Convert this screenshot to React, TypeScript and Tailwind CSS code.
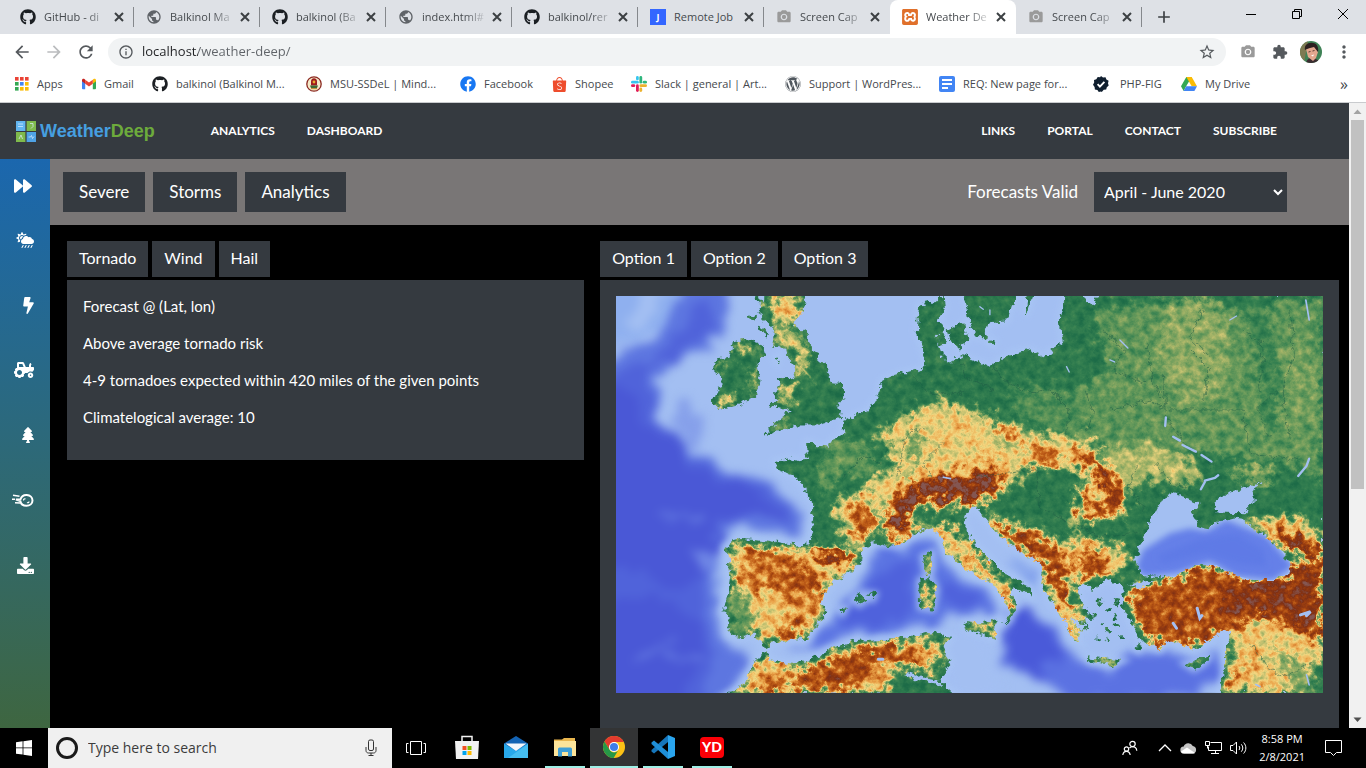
import React from "react";
import {
  MdAdd,
  MdArrowBack,
  MdArrowForward,
  MdCameraAlt,
  MdExtension,
  MdInfoOutline,
  MdMoreVert,
  MdPublic,
  MdRefresh,
  MdStarBorder,
} from "react-icons/md";
import {
  FaBolt,
  FaCloudSunRain,
  FaDownload,
  FaFacebook,
  FaForward,
  FaGithub,
  FaTractor,
  FaTree,
  FaWordpress,
} from "react-icons/fa";
import { SiShopee, SiXampp } from "react-icons/si";

/* ---------- browser icons ---------- */

const GithubIcon = () => <FaGithub className="size-4 shrink-0 text-[#1b1f23]" />;
const GlobeIcon = () => <MdPublic className="size-4 shrink-0 text-[#5f6368]" />;
const CameraIcon = () => <MdCameraAlt className="size-4 shrink-0 text-[#9a9a9a]" />;
const JobIcon = () => (
  <span className="flex size-4 shrink-0 items-center justify-center bg-[#3366ff] text-[9px] font-bold text-white">J</span>
);
const XamppIcon = () => <SiXampp className="size-4 shrink-0 text-[#e0702b]" />;

const AppsIcon = () => {
  const colors = ["#ea4335", "#ea4335", "#ea4335", "#34a853", "#4285f4", "#fbbc05", "#34a853", "#fbbc05", "#fbbc05"];
  return (
    <svg viewBox="0 0 14 14" className="size-3.5">
      {colors.map((c, i) => (
        <rect key={i} x={(i % 3) * 5} y={Math.floor(i / 3) * 5} width="3.6" height="3.6" fill={c} />
      ))}
    </svg>
  );
};

const GmailIcon = () => (
  <svg viewBox="0 0 24 18" className="h-3 w-3.5">
    <path d="M0 2v14.400a1.600 1.600 0 0 0 1.600 1.600H5.500V6z" fill="#4285f4" />
    <path d="M18.500 6v12h3.900a1.600 1.600 0 0 0 1.600-1.600V2z" fill="#34a853" />
    <path d="M18.500 1.500V8.500L24 4.400V2.400C24 .1 21.500-.9 19.800.5z" fill="#fbbc04" />
    <path d="M5.500 8.500V1.500L12 6.400l6.500-4.900v7L12 13.400z" fill="#ea4335" />
    <path d="M0 2.400v2L5.500 8.500v-7L4.200.5C2.500-.9 0 .1 0 2.400z" fill="#c5221f" />
  </svg>
);

const CrestIcon = () => (
  <svg viewBox="0 0 16 16" className="size-4">
    <circle cx="8" cy="8" r="7.200" fill="#f4e9c8" stroke="#8c2a22" strokeWidth="1.300" />
    <path d="M8 2.300c2 0 3 1.500 3 3.200v4H5v-4c0-1.700 1-3.200 3-3.200z" fill="#9c1d1d" />
    <circle cx="8" cy="6" r="1.400" fill="#e8a92d" />
    <path d="M4 9.500h8l-1.200 3H5.200z" fill="#3d6b34" />
    <path d="M5 12.200h6v1H5z" fill="#d08a2c" />
  </svg>
);

const SlackIcon = () => (
  <svg viewBox="0 0 16 16" className="size-4">
    <rect x="5" y="0" width="2.800" height="4.300" rx="1.400" fill="#36c5f0" />
    <rect x="0" y="4.800" width="7.800" height="2.800" rx="1.400" fill="#36c5f0" />
    <rect x="8.400" y="0" width="2.800" height="7.600" rx="1.400" fill="#2eb67d" />
    <rect x="11.700" y="4.800" width="4.300" height="2.800" rx="1.400" fill="#2eb67d" />
    <rect x="8.400" y="8.300" width="7.600" height="2.800" rx="1.400" fill="#ecb22e" />
    <rect x="8.400" y="11.600" width="2.800" height="4.400" rx="1.400" fill="#ecb22e" />
    <rect x="5" y="8.300" width="2.800" height="7.700" rx="1.400" fill="#e01e5a" />
    <rect x="0" y="8.300" width="4.300" height="2.800" rx="1.400" fill="#e01e5a" />
  </svg>
);

const DocsIcon = () => (
  <svg viewBox="0 0 16 16" className="size-4">
    <rect width="16" height="16" rx="2" fill="#4285f4" />
    <path d="M3 4h10M3 8h10M3 12h6" stroke="#fff" strokeWidth="1.800" />
  </svg>
);

const VerifiedIcon = () => (
  <svg viewBox="0 0 16 16" className="mr-[3px] size-4">
    <path
      d="M8 0l2 1.400 2.500-.2.900 2.300 2.200 1.200L15 7.200l.7 2.400-1.900 1.600-.6 2.400-2.500.2L8.800 16 8 15.400l-2.200.5-1.400-2-2.500-.4-.3-2.500L0 8.800l1.200-2.200L1 4.100l2.300-.9L4.700.9l2.400.4z"
      fill="#0f1e2e"
    />
    <path d="M4.600 8.200l2.300 2.400 4.500-4.700" fill="none" stroke="#fff" strokeWidth="1.900" />
  </svg>
);

const DriveIcon = () => (
  <svg viewBox="0 0 16 14" className="h-3.5 w-4">
    <path d="M5.300 0h5.400L5 9.600 2.600 14 0 9.300z" fill="#34a853" />
    <path d="M5.300 0h5.400L16 9.300h-5.300z" fill="#fbbc04" />
    <path d="M5.200 9.300H16L13.400 14H2.600z" fill="#4285f4" />
  </svg>
);

const Avatar = () => (
  <svg viewBox="0 0 22 22" className="size-[22px] rounded-full">
    <rect width="22" height="22" fill="#3f8256" />
    <path d="M0 0h8L4 22H0z" fill="#7d7a52" />
    <path d="M6 22c1-4 3-5 6-5s7 2 8 5z" fill="#3a2c30" />
    <path d="M6 8l8-4 4 7-2 6-3 3-5-4z" fill="#e3a78e" />
    <path d="M5 9c-1-5 3-8 8-7 4 0 6 5 5 9l-4-5-4 1-3 1z" fill="#2c2020" />
    <path d="M8.500 11l2-.5M12.500 10l2-.5" stroke="#5a3a30" />
    <path d="M11 14.500l3-1-1 2z" fill="#fff" />
  </svg>
);

/* ---------- browser frame ---------- */

const tabs = [
  { title: "GitHub - di", Icon: GithubIcon },
  { title: "Balkinol Ma", Icon: GlobeIcon },
  { title: "balkinol (Ba", Icon: GithubIcon },
  { title: "index.html#", Icon: GlobeIcon },
  { title: "balkinol/rer", Icon: GithubIcon },
  { title: "Remote Job", Icon: JobIcon },
  { title: "Screen Cap", Icon: CameraIcon },
  { title: "Weather De", Icon: XamppIcon, active: true },
  { title: "Screen Cap", Icon: CameraIcon },
];

const bookmarks = [
  { label: "Apps", Icon: AppsIcon, width: "w-[67px]" },
  { label: "Gmail", Icon: GmailIcon, width: "w-[70px]" },
  { label: "balkinol (Balkinol M...", Icon: GithubIcon, width: "w-[154px]" },
  { label: "MSU-SSDeL | Mind...", Icon: CrestIcon, width: "w-[154px]" },
  { label: "Facebook", Icon: () => <FaFacebook className="size-4 text-[#1877f2]" />, width: "w-[92px]" },
  { label: "Shopee", Icon: () => <SiShopee className="size-[15px] text-[#ee4d2d]" />, width: "w-[79px]" },
  { label: "Slack | general | Art...", Icon: SlackIcon, width: "w-[154px]" },
  { label: "Support | WordPres...", Icon: () => <FaWordpress className="size-4 text-[#50575e]" />, width: "w-[154px]" },
  { label: "REQ: New page for...", Icon: DocsIcon, width: "w-[154px]" },
  { label: "PHP-FIG", Icon: VerifiedIcon, width: "w-[88px]" },
  { label: "My Drive", Icon: DriveIcon, width: "w-[90px]" },
];

function TabStrip() {
  return (
    <div className="flex h-[34px] shrink-0 bg-[#dee1e6] pl-2">
      {tabs.map(({ title, Icon, active }, i) => (
        <div
          key={i}
          className={
            active
              ? "flex w-[126px] shrink-0 items-center rounded-t-lg bg-white pl-3"
              : "flex w-[126px] shrink-0 items-center pl-3"
          }
        >
          <Icon />
          <span
            className={
              title === "Remote Job"
                ? "ml-2 w-[68px] whitespace-nowrap text-[11px] text-[#45494d]"
                : "ml-2 w-[68px] whitespace-nowrap text-[11px] text-[#45494d] [mask-image:linear-gradient(to_right,black_42px,transparent_66px)]"
            }
          >
            {title}
          </span>
          <button aria-label={`Close ${title}`} className="text-[#3c4043]">
            <svg viewBox="0 0 14 14" className="size-3.5">
              <path d="M3 3l8 8M11 3l-8 8" fill="none" stroke="currentColor" strokeWidth="2" />
            </svg>
          </button>
          {!active && i !== 6 && <span className="ml-auto h-5 w-px bg-[#85888c]" />}
        </div>
      ))}
      <button aria-label="New tab" className="ml-3 text-[#3c4043]">
        <MdAdd className="size-5" />
      </button>
      <div className="ml-auto flex h-7 text-black">
        <button aria-label="Minimize" className="flex w-[46px] items-center justify-center">
          <svg viewBox="0 0 10 10" className="size-2.5"><path d="M0 5.500h10" stroke="currentColor" /></svg>
        </button>
        <button aria-label="Restore" className="flex w-[46px] items-center justify-center">
          <svg viewBox="0 0 10 10" className="size-2.5" fill="none" stroke="currentColor">
            <path d="M.5 2.500h7v7h-7zM2.500 2.500v-2h7v7h-2" />
          </svg>
        </button>
        <button aria-label="Close" className="flex w-[46px] items-center justify-center">
          <svg viewBox="0 0 10 10" className="size-2.5"><path d="M0 0l10 10M10 0L0 10" stroke="currentColor" /></svg>
        </button>
      </div>
    </div>
  );
}

function Toolbar() {
  return (
    <div className="flex h-[36px] shrink-0 items-center bg-white px-3 text-[#55595d]">
      <button aria-label="Back"><MdArrowBack className="size-5" /></button>
      <button aria-label="Forward" className="ml-3 text-[#babcbe]"><MdArrowForward className="size-5" /></button>
      <button aria-label="Reload" className="ml-3"><MdRefresh className="size-5" /></button>
      <div className="ml-3 flex h-7 grow items-center rounded-full bg-[#f1f3f4] px-2.5">
        <MdInfoOutline className="size-4" />
        <input
          aria-label="Address"
          className="ml-2 grow bg-[linear-gradient(to_right,#202124_56px,#5f6368_56px)] bg-clip-text text-[13px] text-transparent outline-none"
          defaultValue="localhost/weather-deep/"
        />
        <button aria-label="Bookmark this page"><MdStarBorder className="size-[18px]" /></button>
      </div>
      <button aria-label="Capture" className="ml-3.5"><MdCameraAlt className="size-4 text-[#9a9a9a]" /></button>
      <button aria-label="Extensions" className="ml-4"><MdExtension className="size-4" /></button>
      <button aria-label="Profile" className="ml-3"><Avatar /></button>
      <button aria-label="Menu" className="ml-3"><MdMoreVert className="size-5" /></button>
    </div>
  );
}

function BookmarksBar() {
  return (
    <div className="flex h-[33px] shrink-0 items-center border-b border-[#c9cbce] bg-white pb-1 pl-[15px] pr-[18px]">
      {bookmarks.map(({ label, Icon, width }) => (
        <a key={label} href="#" className={`flex shrink-0 items-center gap-2 whitespace-nowrap text-[11px] text-[#45494d] ${width}`}>
          <Icon />
          {label}
        </a>
      ))}
      <button aria-label="More bookmarks" className="ml-auto text-base leading-4 text-[#45494d]">»</button>
    </div>
  );
}

/* ---------- relief map ---------- */

const EUROPE =
  "M1000 18L985 32 930 45 925 85 922 130 935 160 945 200 948 235 900 245 850 258 815 275 808 312 790 340 775 362 740 375 705 392 697 435 660 458 655 475 620 470 608 458 590 458 592 495 598 508 565 512 540 503 495 518 510 545 550 555 580 585 590 615 610 630 612 670 608 720 600 765 560 768 500 758 460 752 400 746 375 752 345 772 358 800 362 860 355 910 340 965 357 985 358 1035 400 1040 432 1030 465 1075 485 1058 540 1048 590 1045 612 1010 652 968 632 938 650 900 670 870 720 850 752 820 755 775 790 758 830 765 865 770 900 740 940 718 965 712 990 735 1005 775 1040 815 1085 850 1115 865 1150 880 1180 920 1195 950 1200 970 1182 998 1200 992 1220 945 1204 915 1210 892 1250 905 1264 918 1265 895 1230 878 1180 850 1140 810 1100 770 1070 730 1060 692 1065 665 1100 650 1120 680 1140 705 1170 740 1210 770 1250 795 1290 820 1300 850 1295 890 1320 925 1350 970 1370 1000 1385 1040 1412 1055 1400 1020 1425 1020 1418 985 1450 985 1420 950 1405 905 1415 880 1450 895 1490 870 1525 882 1545 895 1535 920 1545 960 1570 1010 1590 1045 1650 1080 1670 1045 1710 1060 1745 1078 1800 1050 1840 1020 1865 1025 1850 1070 1850 1130 1825 1215H2145V12H1465L1455 45 1430 40 1415 12H1370L1350 90 1360 160 1320 185 1305 207 1265 180 1200 192 1140 232 1095 212 1050 195 1020 220 995 195 978 145 1008 120 985 90 1003 60z";
const BRITAIN =
  "M470 12L450 50 460 90 492 110 485 172 530 175 540 210 557 230 550 272 505 262 517 290 487 315 500 325 478 347 545 362 520 380 480 415 465 437 510 420 560 405 620 405 690 385 695 358 678 345 706 310 700 285 660 280 650 240 622 192 602 180 590 130 550 105 580 62 590 12z";
const IRELAND =
  "M370 155L410 148 455 160 465 195 440 220 450 270 437 320 380 345 325 358 305 330 330 290 342 265 315 250 315 210 360 205z";
const AFRICA =
  "M350 1215L400 1185 440 1110 465 1085 482 1112 540 1122 600 1110 660 1078 740 1055 860 1045 980 1030 1020 1045 1000 1080 1020 1110 1000 1150 990 1175 1035 1215z";
const ISLANDS =
  "M1065 12L1080 90 1098 140 1125 140 1130 100 1190 92 1202 50 1220 12zM1015 122L1062 102 1072 140 1050 175 1028 165zM975 135L1000 130 1010 158 990 165zM1065 998L1115 1002 1162 988 1152 1018 1155 1048 1120 1035 1070 1018zM930 872L962 860 978 900 967 958 932 952zM940 800L967 788 968 838 950 854zM1433 1101L1480 1106 1532 1114 1510 1124 1440 1114zM1728 1122L1765 1112 1802 1096 1782 1120 1752 1138zM730 928L750 914 770 930 748 944zM690 958l16-4-8 14zM778 912l16 2-4 10zM1140 150l14 4-3 10-12-6zM495 208l9-6-4 14zM1575 1075l18-10-8 18zM1370 985l40 5 20 30-15-2zM1255 18h10l-18 60z";
const AEGEAN =
  "M1458 930l18-4 4 12-14 4zM1490 952l14 2-4 12-12-4zM1512 930l16 4-2 10-14-4zM1470 1000l12 2-2 10-10-2zM1492 1020l14 0-2 12-12-4zM1512 1004l12 2 0 8-12 0zM1530 1038l14 2-6 8zM1460 1040l10 2-2 10-8-4zM1440 965l12 4 8 12-14-4zM1508 975l14 6-8 10zM1484 1048l10 2-4 8z";
const BLACK_SEA =
  "M1660 625L1690 612 1720 620 1772 640 1745 668 1772 710 1795 715 1830 690 1870 680 1900 685 1920 712 1970 740 2012 780 2042 820 2035 850 1990 870 1930 870 1870 855 1820 825 1750 830 1700 858 1650 862 1595 855 1575 810 1590 768 1608 720 1630 680z";
const AZOV = "M1820 668L1815 640 1850 610 1900 595 1962 578 1930 600 1935 630 1905 670z";

function ReliefMap() {
  return (
    <svg viewBox="18 18 2121 1191" preserveAspectRatio="xMidYMid slice" role="img" aria-label="Relief map of Europe" className="block w-full">
      <defs>
        <filter id="coast" filterUnits="userSpaceOnUse" x="0" y="0" width="2160" height="1230" colorInterpolationFilters="sRGB">
          <feTurbulence type="fractalNoise" baseFrequency="0.05" numOctaves="3" seed="4" />
          <feDisplacementMap in="SourceGraphic" scale="28" xChannelSelector="R" yChannelSelector="G" />
        </filter>
        <filter id="soft" filterUnits="userSpaceOnUse" x="-60" y="-60" width="2280" height="1350" colorInterpolationFilters="sRGB">
          <feTurbulence type="fractalNoise" baseFrequency="0.014" numOctaves="4" seed="9" result="n" />
          <feDisplacementMap in="SourceGraphic" in2="n" scale="90" xChannelSelector="R" yChannelSelector="G" />
          <feGaussianBlur stdDeviation="14" />
        </filter>
        <filter id="halo" filterUnits="userSpaceOnUse" x="0" y="0" width="2160" height="1230">
          <feGaussianBlur stdDeviation="9" />
        </filter>
        <filter id="relief" filterUnits="userSpaceOnUse" x="0" y="0" width="2160" height="1230" colorInterpolationFilters="sRGB">
          <feGaussianBlur in="SourceGraphic" stdDeviation="10" result="blurred" />
          <feTurbulence type="fractalNoise" baseFrequency="0.035" numOctaves="4" seed="21" result="warp" />
          <feDisplacementMap in="blurred" in2="warp" scale="90" xChannelSelector="R" yChannelSelector="G" result="height" />
          <feTurbulence type="fractalNoise" baseFrequency="0.04" numOctaves="5" seed="7" />
          <feColorMatrix values="1 0 0 0 0  1 0 0 0 0  1 0 0 0 0  0 0 0 0 1" result="noise" />
          <feComposite in="height" in2="noise" operator="arithmetic" k1="0.5" k2="0.78" k3="0.22" k4="-0.09" />
          <feComponentTransfer>
            <feFuncR type="table" tableValues="0.11 0.22 0.42 0.66 0.95 0.92 0.76 0.62 0.50 0.52" />
            <feFuncG type="table" tableValues="0.42 0.51 0.61 0.71 0.84 0.64 0.38 0.25 0.19 0.34" />
            <feFuncB type="table" tableValues="0.28 0.32 0.36 0.41 0.50 0.29 0.10 0.06 0.08 0.32" />
          </feComponentTransfer>
        </filter>
        <mask id="land" maskUnits="userSpaceOnUse" x="0" y="0" width="2160" height="1230">
          <g filter="url(#coast)">
            <path d={EUROPE + BRITAIN + IRELAND + AFRICA + ISLANDS} fill="#fff" stroke="#fff" strokeWidth="3" />
            <path d={AEGEAN} fill="#fff" />
            <path d="M455 40l-20-30M440 75l-25 10M450 110l22 30" stroke="#fff" strokeWidth="9" />
            <path d={BLACK_SEA + AZOV} fill="#000" />
            <path d="M1560 885l40-15 35 8-45 16z" fill="#000" />
            <path d="M885 1150l60 20 45 10" stroke="#000" strokeWidth="12" fill="none" />
          </g>
        </mask>
        <clipPath id="blackSea"><path d={BLACK_SEA} /></clipPath>
      </defs>

      {/* sea floor */}
      <rect x="18" y="18" width="2121" height="1191" fill="#a3bff2" />
      <g filter="url(#soft)">
        <path d="M-60 240L140 150 230-20H340L350 90 290 180 180 220 140 280 150 400 240 480 350 530 480 580 590 690 570 725 350 715 320 790 320 960 350 1060 420 1110 330 1260H-60z" fill="#5d76e0" />
        <path d="M-60 270L140 200 250 60 300 20 320 100 240 180 120 240 100 300 190 440 250 510 350 550 470 600 560 690 340 695 300 790 280 960 310 1060 280 1260H-60z" fill="#5063da" />
        <path d="M-60 290L60 300 150 440 300 560 460 610 520 690 340 700 300 850 200 900-60 780z" fill="#4a58d6" />
        <path d="M-60 980L120 900 270 990 280 1080 230 1260H-60z" fill="#4a58d6" />
        <path d="M-60-20H240L150 120-60 210z" fill="#8fb0ef" />
        <path d="M110-20h70l-70 120-60 20z" fill="#a3bff2" />
        <path d="M190 350l40-30 50 50 0 90-50 10z" fill="#86a0ea" />
        <path d="M240 780l40-10 30 60-30 20z" fill="#7088e6" />
        <path d="M650 1010L720 900 800 790 900 760 960 740 1000 830 1060 880 1150 920 1150 985 1040 970 920 1010 760 1040 620 1085 560 1080z" fill="#5b74e2" />
        <path d="M680 1010l120-170 90-40 30 60-20 120-120 40zM1000 870l90 40 30 50-110-20z" fill="#4f62dc" />
        <path d="M1170 1060L1230 980 1300 990 1380 1090 1500 1150 1580 1090 1720 1100 1820 1070 1830 1180 1650 1240 1400 1230 1280 1170 1180 1120z" fill="#5b72e2" />
        <path d="M1180 1020l50-60 60 30 80 120-90 50-90-50z" fill="#4a5ad9" />
        <path d="M940 1060l110-60 90 60 50 160h-150z" fill="#a3bff2" />
        <path d="M1210 820l70 10 20 70-60-20z" fill="#83a2ec" />
        <path d="M60 1130l80-50 60-40M160 1100l100 20M150 690l60 0 60-10" stroke="#6b84e4" strokeWidth="10" fill="none" />
      </g>
      <g clipPath="url(#blackSea)">
        <path d="M1580 830L1600 780 1680 730 1740 715 1790 725 1850 690 1970 740 2050 830 1990 870 1880 860 1800 815 1700 850 1600 860z" fill="#6580e8" filter="url(#halo)" />
        <path d="M1640 800l120-50 120-20 80 50 10 50-90-10-90-30-130 30z" fill="#5f7ae6" filter="url(#halo)" />
      </g>
      <path d={EUROPE + AFRICA + ISLANDS} fill="none" stroke="#a9c6f5" strokeWidth="22" opacity="0.8" filter="url(#halo)" />
      <path d={AEGEAN} fill="none" stroke="#a3bff2" strokeWidth="26" filter="url(#halo)" />

      {/* terrain: brightness is elevation, coloured by the relief filter */}
      <g mask="url(#land)">
        <g filter="url(#relief)">
          <rect x="-40" y="-40" width="2240" height="1320" fill="#0c0c0c" />
          {/* eastern plains */}
          <path d="M1450 60L1700 20 1850 60 2139 20V560L1900 500 1700 480 1480 460 1340 420 1340 330 1500 240z" fill="#2c2c2c" />
          <path d="M1680 40l120-20 60 90-20 200-120 40-80-160z" fill="#404040" />
          <path d="M1950 200l150-60 39 260-130 20z" fill="#363636" />
          <path d="M1900 20l60 0 60 260-40 200-30-200z" fill="#181818" />
          <path d="M1200 300l120-20 80 60 60 80-100 10-150-60z" fill="#222222" />
          <path d="M1480 470l160-10 120 60 10 60-160 0-80 20z" fill="#505050" />
          <path d="M1850 530l120 0 30 40-100 10z" fill="#444444" />
          {/* central uplands */}
          <path d="M660 440l60 0 80 60-20 60-80-10-60 60-20-60z" fill="#2a2a2a" />
          <path d="M800 430L900 370 1000 330 1140 380 1240 430 1420 440 1500 520 1560 650 1520 690 1380 690 1440 560 1330 520 1240 540 1200 600 1100 550 900 560 830 640 800 600 860 500z" fill="#6a6a6a" />
          <path d="M1200 400l80 20-40 70-80-20z" fill="#484848" />
          <path d="M900 430l30 10-20 110-20 0z" fill="#2a2a2a" />
          <path d="M680 620l70 0 60-80 30 20-40 160-70 60-50-80z" fill="#6a6a6a" />
          <path d="M1160 390l90 50-20 30-80-40zM1080 480l110 40-20 15-90-40zM1040 400l40 10-20 12zM880 530l60-20-20 30z" fill="#989898" />
          <path d="M720 640l60 10 20 50-60 60-10-60z" fill="#ababab" />
          <path d="M1250 460l90 10 10 60-80 0z" fill="#a0a0a0" />
          {/* Alps and Apennines */}
          <path d="M820 720L830 640 880 580 960 550 1190 535 1170 620 1080 650 920 650 900 690 940 720 860 765z" fill="#8e8e8e" />
          <path d="M845 700L855 640 900 595 980 565 1180 550 1140 610 1060 630 940 630 890 660 885 720 865 740z" fill="#e8e8e8" />
          <path d="M940 700L1000 710 1070 760 1130 830 1180 870 1220 950 1190 980 1150 920 1080 850 1020 800z" fill="#747474" />
          <path d="M960 700l60 20 30 20-60-15zM1070 770l30 20 40 60-40-10zM1190 920l20 0 5 40-20 10z" fill="#bababa" />
          {/* Carpathians */}
          <path d="M1370 470L1430 470 1510 540 1550 640 1520 680 1410 690 1400 660 1490 650 1470 570z" fill="#949494" />
          <path d="M1395 480L1430 490 1500 550 1535 640 1510 665 1410 672 1410 655 1500 645 1480 580z" fill="#c8c8c8" />
          <path d="M1400 590l35 0 5 40-30 10z" fill="#bcbcbc" />
          {/* Balkans */}
          <path d="M1110 670L1160 690 1280 720 1380 770 1400 740 1380 690 1400 690 1420 750 1550 780 1560 830 1500 860 1380 870 1400 980 1430 1060 1380 1050 1310 930 1300 840 1180 760z" fill="#707070" />
          <path d="M1130 690L1200 710 1330 760 1370 820 1370 920 1410 980 1370 960 1320 890 1310 830 1200 760z" fill="#bababa" />
          <path d="M1390 790l100 30 10 35-90-5zM1400 760l110 25-60 6zM1370 1000l30 40-15 0z" fill="#b8b8b8" />
          {/* Iberia */}
          <path d="M345 765L590 775 750 790 730 840 660 880 630 1010 590 1045 460 1060 400 1000 370 1000 380 880z" fill="#707070" />
          <path d="M400 780L520 770 640 860 640 910 590 1000 520 1050 470 1050 560 960 480 900 380 880z" fill="#969696" />
          <path d="M590 775l90 5 60 30-30 15-90-25z" fill="#d4d4d4" />
          <path d="M520 800l70 40 50 50-40 20-60-40zM500 1030l80-40 0 40zM400 900l120-30 40-10-80 40zM420 790l80-15-70 40z" fill="#bababa" />
          <path d="M350 915l60 0 20 90-60 30z" fill="#303030" />
          {/* Anatolia, Caucasus, Levant */}
          <path d="M1560 900L1700 860 1800 820 1900 860 2040 860 2050 820 2139 810V1080L1960 980 1880 1020 1750 1070 1640 1075 1570 980z" fill="#b0b0b0" />
          <path d="M1850 880L2050 840 2139 820V1060L1980 970 1840 990z" fill="#cecece" />
          <path d="M1900 690l170-10 69 60v60l-130-20z" fill="#747474" />
          <path d="M1970 720l90 10 79 50v40l-90-40z" fill="#d0d0d0" />
          <path d="M1870 1020L1990 990 2139 1060 2110 1140 2060 1209H1830L1860 1100z" fill="#707070" />
          <path d="M1960 1060l60 20 100 80 0 49-60 0-40-90z" fill="#3a3a3a" />
          <path d="M1850 1150l40-20-30 70zM1900 1120l60-10-30 20z" fill="#b0b0b0" />
          {/* Maghreb */}
          <path d="M370 1209L470 1100 560 1140 700 1080 860 1050 1000 1060 970 1140 850 1130 830 1209z" fill="#828282" />
          <path d="M540 1209L560 1150 680 1110 780 1070 850 1060 940 1100 930 1130 810 1110 770 1160 700 1209zM440 1209l60-50 30 20-30 30zM480 1110l60 10-10 20z" fill="#b2b2b2" />
          {/* British Isles */}
          <path d="M470 18h110l-20 70-60 20-20-40z" fill="#747474" />
          <path d="M490 120l80 0 20 60 10 90-30-10-20-90-60-10zM510 270l40 10 0 70-40-10zM490 405l40-25 10 20z" fill="#626262" />
          <path d="M320 315l70 10-60 30zM370 160l50 0-10 40zM425 255l20 0 0 50-16 0zM315 215l30 10-10 20zM440 170l15 20-15 10z" fill="#747474" />
          {/* islands */}
          <path d="M945 800l25 0-2 45-15 0zM935 875l35 20-6 55-25-10zM1075 1000l75-5 0 45zM1440 1104h90v14h-90zM1735 1115l40-5-20 20z" fill="#8c8c8c" />
        </g>
        <g filter="url(#coast)" fill="none" stroke="#1c5a44" strokeWidth="3" opacity="0.5">
          <path d="M1370 430l10-70-60-60-60 10-80-40-60-80M1430 300l20 70-20 60M1660 250l10 130 60 90 80 60M1740 180l60 60-20 90M2040 60l10 130-30 120 20 130M1900 120l60 50-10 130M1680 360l220 0 20 130 160 20M1100 560l180-20 10 120 80 30M860 560l30-130 60-20M700 560l60-60 60 20M960 560l-20-40 60-60M1400 700l60 40 120-10M1580 530l-20 60 40 70M1500 360l120-30 50 30M1610 160l20 120 40 60M1920 1060l60 80 60 20 60-40M760 930l-130-20M1050 200l20 60 80 40M900 250l60 60 100 0M1480 120l60 60-30 60 100 40M1780 60l-40 80 60 60M2000 300l-60 60 40 80M1640 520l40 60 60 10" />
        </g>
        <g fill="none" stroke="#a3bff2" strokeLinecap="round">
          <path d="M1668 382l-2 26M1690 440l20 12M1718 465l40 20M1775 495l30 20M1785 572l30-8 10-8M1773 598l12-22M2065 558l25-30 8-22" strokeWidth="7" />
          <path d="M2088 30l10 60M2090 1155l8 30M1000 562l22 4M1950 1190l-12-6" strokeWidth="5" />
          <path d="M1762 955l8 30 6-8M1690 1000l10 15M2072 975l30-10-12 12M805 1108h14" strokeWidth="9" />
          <path d="M1110 50l10 8M1140 60v14M1370 230l8 16M1530 150l24 24M1860 90l20-12M1500 210l14 6" strokeWidth="4" />
        </g>
      </g>
    </svg>
  );
}

/* ---------- weather page ---------- */

const CometIcon = () => (
  <svg viewBox="0 0 22 14" className="h-3.5 w-[22px]" fill="none" stroke="currentColor">
    <path d="M20.500 7.500c0 3-2.700 5.200-6 5.200S8.800 10.700 8.300 8L4 6.500l4.500-.2C9.600 3 12 1.700 14.800 1.900c3.300.2 5.700 2.600 5.700 5.600z" strokeWidth="2" />
    <path d="M1 2.200l6.500 1M0 6.200h3M3 9.700l5 .2" strokeWidth="1.500" />
    <path d="M11.500 7.500c0-1.500 1-2 2-1.500M15 9.500c1 .6 2 0 2-1" strokeWidth="1.200" />
  </svg>
);

const sideLinks = [
  { label: "Expand", Icon: () => <FaForward className="mr-0.5 size-[18px]" /> },
  { label: "Rain", Icon: () => <FaCloudSunRain className="size-[18px]" /> },
  { label: "Lightning", Icon: () => <FaBolt className="h-[17px] w-[11px]" /> },
  { label: "Agriculture", Icon: () => <FaTractor className="size-5" /> },
  { label: "Forest", Icon: () => <FaTree className="h-4 w-3" /> },
  { label: "Meteor", Icon: CometIcon },
  { label: "Download", Icon: () => <FaDownload className="size-[17px]" /> },
];

function Logo() {
  return (
    <a href="#" className="flex items-center gap-1 font-['Liberation_Sans',sans-serif] text-lg font-bold leading-6">
      <svg viewBox="0 0 20 21" className="h-[21px] w-5">
        <rect width="9.400" height="10" fill="#62b5f0" />
        <rect x="10.600" width="9.400" height="10" fill="#7fba4c" />
        <rect y="11" width="9.400" height="10" fill="#7fba4c" />
        <rect x="10.600" y="11" width="9.400" height="10" fill="#4fa3e6" />
        <path d="M2 3h5M2 5.500h5M14 2.500h3v3l-2 2M3 18l2-4 1.500 4M12.500 16h2l1-1.500 1 3 1.500-2" stroke="#dff0ff" fill="none" opacity=".7" />
      </svg>
      <span className="text-[#469fe0]">
        Weather<span className="text-[#6dab3c]">Deep</span>
      </span>
    </a>
  );
}

function Header() {
  return (
    <header className="flex h-14 shrink-0 items-center bg-[#353a40] pl-4 pr-[72px] text-white">
      <Logo />
      <nav className="ml-14 flex grow gap-8 text-xs font-bold">
        <a href="#">ANALYTICS</a>
        <a href="#" className="mr-auto">DASHBOARD</a>
        <a href="#">LINKS</a>
        <a href="#">PORTAL</a>
        <a href="#">CONTACT</a>
        <a href="#">SUBSCRIBE</a>
      </nav>
    </header>
  );
}

function TabButtons({ labels }: { labels: string[] }) {
  return (
    <div className="mb-[3px] flex gap-1">
      {labels.map((label) => (
        <button key={label} className="h-9 bg-[#353a40] px-3 pb-0.5">
          {label}
        </button>
      ))}
    </div>
  );
}

function WeatherPage() {
  return (
    <div className="flex min-w-0 grow flex-col bg-black font-[Lato,sans-serif] text-base text-white">
      <Header />
      <div className="flex min-h-0 grow">
        <aside className="flex w-[50px] shrink-0 flex-col items-end bg-linear-to-b from-[#1b67ae] to-[#3e6640] pr-4">
          {sideLinks.map(({ label, Icon }, i) => (
            <a
              key={label}
              href="#"
              aria-label={label}
              className={i === 0 ? "flex h-[54px] items-center" : "flex h-[54px] items-center not-last:mb-[11px]"}
            >
              <Icon />
            </a>
          ))}
        </aside>
        <main className="min-w-0 grow overflow-hidden">
          <div className="flex h-[66px] items-center gap-2 bg-[#797676] pl-[13px] pr-[62px] text-[17px]">
            <button className="h-10 bg-[#353a40] px-4">Severe</button>
            <button className="h-10 bg-[#353a40] px-4">Storms</button>
            <button className="h-10 bg-[#353a40] px-4">Analytics</button>
            <label htmlFor="period" className="ml-auto mr-2">Forecasts Valid</label>
            <span className="relative text-base">
              <select id="period" className="h-10 w-[193px] appearance-none bg-[#353a40] pl-2.5">
                <option>April - June 2020</option>
              </select>
              <svg viewBox="0 0 10 7" className="pointer-events-none absolute right-1 top-[17px] h-[7px] w-2.5">
                <path d="M1 1l4 4 4-4" fill="none" stroke="#fff" strokeWidth="2" />
              </svg>
            </span>
          </div>
          <div className="grid grid-cols-[7fr_10fr] items-start gap-4 pl-[17px] pr-2.5 pt-4">
            <section>
              <TabButtons labels={["Tornado", "Wind", "Hail"]} />
              <div className="flex flex-col gap-4 bg-[#353a40] px-4 pb-8 pt-4 text-[15px] leading-[21px]">
                <p>Forecast @ (Lat, lon)</p>
                <p>Above average tornado risk</p>
                <p>4-9 tornadoes expected within 420 miles of the given points</p>
                <p>Climatelogical average: 10</p>
              </div>
            </section>
            <section>
              <TabButtons labels={["Option 1", "Option 2", "Option 3"]} />
              <div className="bg-[#353a40] px-4 pb-24 pt-4">
                <ReliefMap />
              </div>
            </section>
          </div>
        </main>
      </div>
    </div>
  );
}

function Scrollbar() {
  return (
    <div className="flex w-[17px] shrink-0 flex-col items-center bg-[#f1f1f1]">
      <svg viewBox="0 0 17 17" className="size-[17px] shrink-0"><path d="M4.500 11l4-4.500 4 4.500z" fill="#a3a3a3" /></svg>
      <div className="h-[59%] w-[13px] bg-[#c1c1c1]" />
      <svg viewBox="0 0 17 17" className="mt-auto size-[17px] shrink-0"><path d="M4.500 6.500l4 4.500 4-4.500z" fill="#505050" /></svg>
    </div>
  );
}

/* ---------- desktop taskbar ---------- */

const StoreIcon = () => (
  <svg viewBox="0 0 24 24" className="size-6">
    <path d="M7 6V1.500h10V6" fill="none" stroke="#f2f2f2" strokeWidth="1.500" />
    <path d="M0 6h24l-1 18H1z" fill="#f2f2f2" />
    <path d="M7.500 11h4v4h-4z" fill="#f25022" />
    <path d="M12.500 11h4v4h-4z" fill="#7fba00" />
    <path d="M7.500 16h4v4h-4z" fill="#00a4ef" />
    <path d="M12.500 16h4v4h-4z" fill="#ffb900" />
  </svg>
);

const MailIcon = () => (
  <svg viewBox="0 0 24 22" className="h-[22px] w-6">
    <path d="M0 7.500L12 0l12 7.500V15H0z" fill="#1464b4" />
    <path d="M0 7.500V22h24V7.500L12 15z" fill="#28a8ea" />
    <path d="M1.500 7.500h21L12 15z" fill="#f4f8fc" />
    <path d="M24 8v14H4z" fill="#45bdf0" />
  </svg>
);

const FolderIcon = () => (
  <svg viewBox="0 0 22 19" className="h-[19px] w-[22px]">
    <path d="M0 1.500h8L10 0h11v6H0z" fill="#e9b64e" />
    <path d="M0 3h22v15H0z" fill="#fce49a" />
    <path d="M4 18.500V11a1.500 1.500 0 0 1 1.500-1.500h11A1.500 1.500 0 0 1 18 11v7.500h-4V14H8v4.500z" fill="#3f9fd6" />
  </svg>
);

const ChromeIcon = () => (
  <svg viewBox="0 0 24 24" className="size-[22px]">
    <circle cx="12" cy="12" r="12" fill="#fbc116" />
    <path d="M12 6.500h10.700A12 12 0 0 0 1.600 6l5.600 9z" fill="#e33b2e" />
    <path d="M1.600 6a12 12 0 0 0 10 18L17 15a5.500 5.500 0 0 1-9.800 0z" fill="#269847" />
    <circle cx="12" cy="12" r="5.500" fill="#fff" />
    <circle cx="12" cy="12" r="4.400" fill="#3f7de8" />
  </svg>
);

const CodeIcon = () => (
  <svg viewBox="0 0 24 24" className="size-6">
    <path d="M17 0l7 3v18l-7 3z" fill="#2aa5ee" />
    <path d="M17 0v7L3 18.500.5 16.500v-1.600z" fill="#1676bb" />
    <path d="M17 24v-7L3 5.500.5 7.500v1.600z" fill="#1f8fd8" />
  </svg>
);

const apps = [
  { label: "Microsoft Store", Icon: StoreIcon, open: false },
  { label: "Mail", Icon: MailIcon, open: false },
  { label: "File Explorer", Icon: FolderIcon, open: true },
  { label: "Google Chrome", Icon: ChromeIcon, open: true, focused: true },
  { label: "Visual Studio Code", Icon: CodeIcon, open: true },
  {
    label: "YD",
    Icon: () => (
      <span className="flex h-[21px] w-6 items-center justify-center rounded bg-[#fb0007] font-[Lato,sans-serif] text-sm font-black text-white">
        YD
      </span>
    ),
    open: true,
  },
];

function Taskbar() {
  return (
    <footer className="flex h-10 shrink-0 items-stretch bg-black text-white">
      <button aria-label="Start" className="flex w-12 items-center justify-center">
        <svg viewBox="0 0 16 16" className="size-4" fill="#fff">
          <path d="M0 2.200l6.600-.9v6.200H0zM7.400 1.200L16 0v7.500H7.400zM0 8.300h6.600v6.300L0 13.700zM7.400 8.300H16V16l-8.600-1.200z" />
        </svg>
      </button>
      <div className="flex w-[344px] items-center bg-[#f0f0f0] pl-2 pr-3.5 text-[#333]">
        <span className="size-[22px] rounded-full border-[3px] border-[#1a1a1a]" />
        <input
          aria-label="Search"
          className="ml-2.5 min-w-0 grow bg-transparent text-sm outline-none placeholder:text-[#3c3c3c]"
          placeholder="Type here to search"
        />
        <svg viewBox="0 0 14 18" className="h-[18px] w-3.5" fill="none" stroke="#333">
          <rect x="4.500" y="1" width="5" height="10.500" rx="1.500" />
          <path d="M2 8v3.500c0 1.500 1 2.500 2.500 2.500h5c1.500 0 2.500-1 2.500-2.500V8M7 14v3M4.500 16.500h5" />
        </svg>
      </div>
      <button aria-label="Task view" className="flex w-12 items-center justify-center">
        <svg viewBox="0 0 20 14" className="h-3.5 w-5" fill="none" stroke="#fff">
          <path d="M4.500.5h11v13h-11zM2.500 2.500h-2v9h2M17.500 2.500h2v9h-2" />
        </svg>
      </button>
      <div className="ml-[3px] flex gap-px">
        {apps.map(({ label, Icon, open, focused }) => (
          <button
            key={label}
            aria-label={label}
            className={focused ? "flex w-12 flex-col items-center bg-[#333435]" : "flex w-12 flex-col items-center"}
          >
            <span className="flex grow items-center"><Icon /></span>
            <span
              className={
                focused ? "h-0.5 w-full bg-[#9ff0e6]" : open ? "h-0.5 w-10 bg-[#9ff0e6]" : "h-0.5 w-10"
              }
            />
          </button>
        ))}
      </div>
      <div className="ml-auto flex items-center gap-2 pr-6">
        <svg viewBox="0 0 16 16" className="mr-3 size-4" fill="none" stroke="#fff" strokeWidth="1.200">
          <circle cx="10.500" cy="4" r="2.700" />
          <circle cx="4.500" cy="9" r="2.200" />
          <path d="M.8 15c.3-2.500 1.700-3.700 3.700-3.700s3.200 1.200 3.700 3.700M7.500 8c.8-.9 1.800-1.300 3-1.300 2.500 0 4 1.500 4.300 4" />
        </svg>
        <svg viewBox="0 0 14 8" className="h-2 w-3.5" fill="none" stroke="#fff" strokeWidth="1.300"><path d="M1 7l6-6 6 6" /></svg>
        <svg viewBox="0 0 17 12" className="h-3 w-[17px]">
          <path d="M4 11.500a3.500 3.500 0 0 1-.3-7A5 5 0 0 1 12.800 4 3.800 3.800 0 0 1 13 11.500z" fill="#c4c4c4" />
          <path d="M1 9.500l6-4 8 5.500c-.5.400-1.200.5-2 .5H4c-1.400 0-2.500-.8-3-2z" fill="#fff" />
        </svg>
        <svg viewBox="0 0 17 14" className="h-3.5 w-[17px]" fill="none" stroke="#fff">
          <path d="M5.500 1.500h11v8H3.500v-4M10.500 9.500v3M6 12.500h8M.5.500h4v4h-4zM2.500 4.500v3" />
        </svg>
        <svg viewBox="0 0 17 14" className="h-3.5 w-[17px]" fill="none" stroke="#fff">
          <path d="M.5 4.500H3l3.500-3.500v12L3 9.500H.5zM9 5c1 1.200 1 2.800 0 4M11.300 3.300c2 2.200 2 5.200 0 7.400M13.600 1.500c3 3.300 3 7.700 0 11" />
        </svg>
        <div className="ml-1 text-center text-[11px] leading-[18px]">
          <p>8:58 PM</p>
          <p>2/8/2021</p>
        </div>
        <svg viewBox="0 0 17 16" className="ml-3 h-4 w-[17px]" fill="none" stroke="#fff"><path d="M.5.500h16v12h-5l-3 3-3-3h-5z" /></svg>
      </div>
    </footer>
  );
}

export default function App() {
  return (
    <div className="flex h-screen flex-col overflow-hidden font-['Open_Sans',sans-serif]">
      <TabStrip />
      <Toolbar />
      <BookmarksBar />
      <div className="flex min-h-0 grow">
        <WeatherPage />
        <Scrollbar />
      </div>
      <Taskbar />
    </div>
  );
}
